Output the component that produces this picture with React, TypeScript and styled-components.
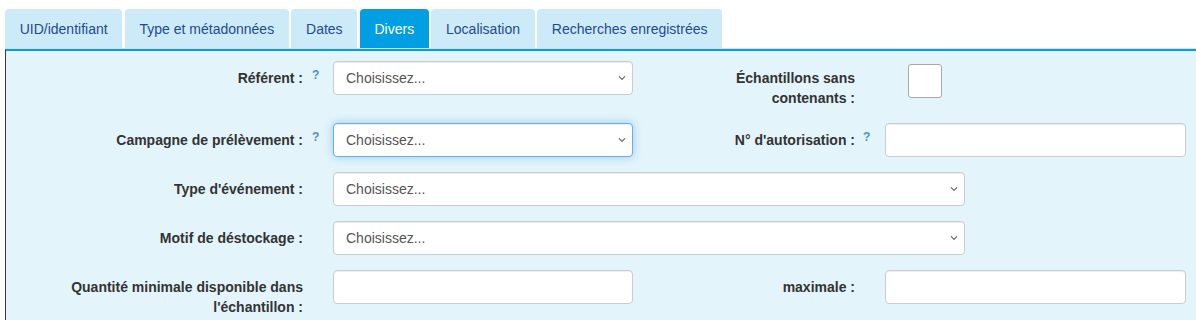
import styled, { createGlobalStyle } from "styled-components";

const GlobalStyle = createGlobalStyle`
  html, body {
    margin: 0;
    padding: 0;
    background: #ffffff;
    overflow: hidden;
  }
  body {
    font-family: "Liberation Sans", Arial, sans-serif;
    font-size: 14px;
    line-height: 20px;
    color: #333333;
  }
`;

const Page = styled.div`
  width: 1240px;
  height: 320px;
  padding: 9px 0 0 5px;
  box-sizing: border-box;
`;

const TabBar = styled.div`
  display: flex;
  align-items: flex-end;
  border-bottom: 1px solid #dddddd;
  height: 39px;
`;

const Tab = styled.div<{ $active?: boolean }>`
  height: 39px;
  box-sizing: border-box;
  padding: 10px 14.7px 9px;
  margin-right: 2.5px;
  border-radius: 4px 4px 0 0;
  line-height: 20px;
  font-size: 14px;
  background: ${(p) => (p.$active ? "#009ee2" : "#cdeaf8")};
  color: ${(p) => (p.$active ? "#ffffff" : "#1f4a8c")};
  white-space: nowrap;
`;

const Panel = styled.div`
  background: #e3f4fb;
  border-top: 2px solid #009ee2;
  border-left: 1px solid #3a3a3a;
  height: 280px;
  padding-top: 10px;
  box-sizing: border-box;
`;

const Form = styled.div`
  display: grid;
  grid-template-columns: 312px 330px 222px 331px;
  row-gap: 15px;
  align-items: start;
`;

const LabelCell = styled.div`
  display: flex;
  justify-content: flex-end;
  align-items: flex-start;
  padding-top: 7px;
`;

const LabelText = styled.label`
  font-weight: bold;
  text-align: right;
  line-height: 20px;
  color: #333333;
`;

const HelpSlot = styled.span<{ $offset: number }>`
  width: 15px;
  flex: none;
  padding-left: ${(p) => p.$offset}px;
  box-sizing: border-box;
  font-size: 12px;
  font-weight: bold;
  line-height: 12px;
  color: #4a90d0;
  margin-top: 1px;
`;

const FieldCell = styled.div<{ $span?: number }>`
  padding: 0 15px;
  grid-column: span ${(p) => p.$span ?? 1};
`;

const SelectBox = styled.div<{ $width?: number; $focused?: boolean }>`
  display: flex;
  align-items: center;
  justify-content: space-between;
  width: ${(p) => (p.$width ? `${p.$width}px` : "100%")};
  height: 34px;
  box-sizing: border-box;
  padding: 0 5px 0 12px;
  background: #ffffff;
  border: 1px solid ${(p) => (p.$focused ? "#66afe9" : "#cccccc")};
  border-radius: 4px;
  box-shadow: ${(p) =>
    p.$focused
      ? "inset 0 1px 1px rgba(0,0,0,.075), 0 0 8px rgba(102,175,233,.6)"
      : "inset 0 1px 1px rgba(0,0,0,.075)"};
  color: #555555;
  font-size: 14px;
`;

const TextInput = styled.input`
  display: block;
  width: 100%;
  height: 34px;
  box-sizing: border-box;
  padding: 6px 12px;
  background: #ffffff;
  border: 1px solid #cccccc;
  border-radius: 4px;
  box-shadow: inset 0 1px 1px rgba(0, 0, 0, 0.075);
  font-family: inherit;
  font-size: 14px;
  outline: none;
`;

const CheckBox = styled.div`
  width: 34px;
  height: 34px;
  box-sizing: border-box;
  margin: 3px 0 0 23px;
  background: #ffffff;
  border: 1px solid #a9a9a9;
  border-radius: 3px;
`;

const Chevron = () => (
  <svg width="10" height="6" viewBox="0 0 10 6" fill="none">
    <path d="M2 1.3 L5 4.3 L8 1.3" stroke="#666" strokeWidth="1.2" />
  </svg>
);

const Label = ({ text, help, offset = 9 }: { text: React.ReactNode; help?: boolean; offset?: number }) => (
  <LabelCell>
    <LabelText>{text}</LabelText>
    <HelpSlot $offset={offset}>{help ? "?" : ""}</HelpSlot>
  </LabelCell>
);

const Select = ({ width, focused }: { width?: number; focused?: boolean }) => (
  <SelectBox $width={width} $focused={focused}>
    <span>Choisissez...</span>
    <Chevron />
  </SelectBox>
);

const tabs = [
  "UID/identifiant",
  "Type et métadonnées",
  "Dates",
  "Divers",
  "Localisation",
  "Recherches enregistrées",
];

export default function App() {
  return (
    <>
      <GlobalStyle />
      <Page>
        <TabBar>
          {tabs.map((t) => (
            <Tab key={t} $active={t === "Divers"}>
              {t}
            </Tab>
          ))}
        </TabBar>
        <Panel>
          <Form>
            <Label text="Référent :" help />
            <FieldCell>
              <Select />
            </FieldCell>
            <Label
              text={
                <>
                  Échantillons sans
                  <br />
                  contenants :
                </>
              }
              offset={8}
            />
            <FieldCell>
              <CheckBox />
            </FieldCell>

            <Label text="Campagne de prélèvement :" help />
            <FieldCell>
              <Select focused />
            </FieldCell>
            <Label text="N° d'autorisation :" help offset={8} />
            <FieldCell>
              <TextInput />
            </FieldCell>

            <Label text="Type d'événement :" />
            <FieldCell $span={3}>
              <Select width={632} />
            </FieldCell>

            <Label text="Motif de déstockage :" />
            <FieldCell $span={3}>
              <Select width={632} />
            </FieldCell>

            <Label
              text={
                <>
                  Quantité minimale disponible dans
                  <br />
                  l'échantillon :
                </>
              }
            />
            <FieldCell>
              <TextInput />
            </FieldCell>
            <Label text="maximale :" offset={8} />
            <FieldCell>
              <TextInput />
            </FieldCell>
          </Form>
        </Panel>
      </Page>
    </>
  );
}
